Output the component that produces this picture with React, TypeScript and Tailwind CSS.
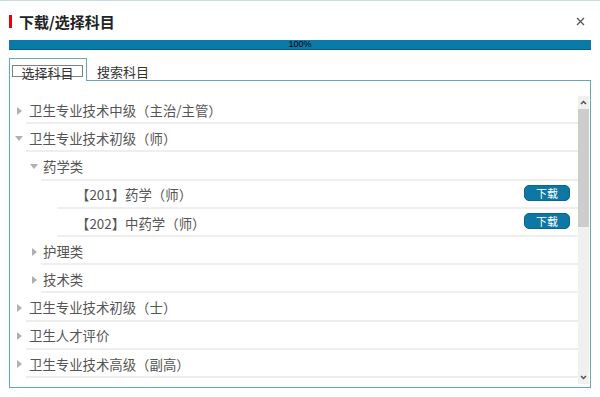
import type { ReactNode } from 'react';

type Row = {
    level: 0 | 1 | 2;
    label: string;
    arrow?: 'right' | 'down';
    download?: boolean;
};

const rows: Row[] = [
    { level: 0, label: '卫生专业技术中级（主治/主管）', arrow: 'right' },
    { level: 0, label: '卫生专业技术初级（师）', arrow: 'down' },
    { level: 1, label: '药学类', arrow: 'down' },
    { level: 2, label: '【201】药学（师）', download: true },
    { level: 2, label: '【202】中药学（师）', download: true },
    { level: 1, label: '护理类', arrow: 'right' },
    { level: 1, label: '技术类', arrow: 'right' },
    { level: 0, label: '卫生专业技术初级（士）', arrow: 'right' },
    { level: 0, label: '卫生人才评价', arrow: 'right' },
    { level: 0, label: '卫生专业技术高级（副高）', arrow: 'right' },
];

const rowIndent = ['pl-[2px]', 'pl-[17px]', 'pl-[33px]'];
const textIndent = ['pl-[3px]', 'pl-[2px]', 'pl-[19px]'];

function Arrow({ dir }: { dir?: 'right' | 'down' }) {
    if (!dir) return null;
    return dir === 'right' ? (
        <svg width="5" height="8" viewBox="0 0 5 8">
            <polygon points="0,0 5,4 0,8" fill="#b0b0b0" />
        </svg>
    ) : (
        <svg width="8" height="5" viewBox="0 0 8 5">
            <polygon points="0,0 8,0 4,5" fill="#b0b0b0" />
        </svg>
    );
}

function TreeRow({ row }: { row: Row }) {
    return (
        <div className={`flex h-[28.2px] ${rowIndent[row.level]}`}>
            <div className="flex w-[14px] items-center justify-center pt-[3px] pb-[2px]">
                <Arrow dir={row.arrow} />
            </div>
            <div
                className={`flex flex-1 items-center border-b-2 border-[#eeeeee] pt-[3px] pr-[8px] ${textIndent[row.level]}`}
            >
                <span className="text-[13.4px] leading-none text-[#555555]">{row.label}</span>
                {row.download && (
                    <button className="mb-[4px] ml-auto flex h-[16px] w-[46px] items-center justify-center rounded-[5px] border border-[#0a6690] bg-[#0c78a3] text-[11px] leading-none text-white">
                        下载
                    </button>
                )}
            </div>
        </div>
    );
}

function ScrollBar() {
    return (
        <div className="mr-[1px] flex w-[11px] flex-col bg-[#f0f0f0]">
            <div className="flex h-[13px] items-center justify-center">
                <svg width="7" height="5" viewBox="0 0 7 5">
                    <polyline points="1,4 3.5,1.5 6,4" fill="none" stroke="#505050" strokeWidth="1.5" />
                </svg>
            </div>
            <div className="h-[118px] bg-[#cdcdcd]" />
            <div className="flex-1" />
            <div className="flex h-[13px] items-center justify-center">
                <svg width="7" height="5" viewBox="0 0 7 5">
                    <polyline points="1,1 3.5,3.5 6,1" fill="none" stroke="#505050" strokeWidth="1.5" />
                </svg>
            </div>
        </div>
    );
}

function Tab({ children }: { children: ReactNode }) {
    return (
        <div className="h-[23px] w-[78px] border-x border-t border-[#64a9b8] pl-[2px] pt-[6px]">
            <div className="flex h-[12px] w-[71px] justify-center border border-[#808080] text-[13px] leading-[13px] text-[#333333]">
                {children}
            </div>
        </div>
    );
}

export default function App() {
    return (
        <div className="h-[397px] w-[600px] border-t border-[#c9dcdf] bg-white font-['Noto_Sans_CJK_SC','Noto_Sans',sans-serif]">
            <div className="flex h-[39px] items-center pt-[2px] pl-[9px] pr-[15px]">
                <div className="h-[13px] w-[3px] bg-[#e50012]" />
                <h1 className="ml-[7px] text-[15px] leading-none font-bold text-[#222222]">下载/选择科目</h1>
                <svg className="ml-auto" width="9" height="9" viewBox="0 0 9 9">
                    <path d="M1 1L8 8M8 1L1 8" stroke="#555555" strokeWidth="1.3" />
                </svg>
            </div>

            <div className="mx-[9px] flex h-[10px] items-center justify-center border-b border-[#075a7c] bg-[#0a7aa7]">
                <span className="font-['Liberation_Sans',sans-serif] text-[9px] leading-none text-black">100%</span>
            </div>

            <div className="mx-[9px] mt-[8px] flex h-[23px]">
                <Tab>选择科目</Tab>
                <div className="flex-1 border-b border-[#64a9b8] pl-[10px] pt-[7px] text-[13px] leading-[13px] text-[#333333]">
                    搜索科目
                </div>
            </div>

            <div className="mx-[9px] flex h-[307px] border-x border-b border-[#64a9b8] pt-[15px] pb-[3px]">
                <div className="flex-1">
                    {rows.map((row) => (
                        <TreeRow key={row.label} row={row} />
                    ))}
                </div>
                <ScrollBar />
            </div>
        </div>
    );
}
